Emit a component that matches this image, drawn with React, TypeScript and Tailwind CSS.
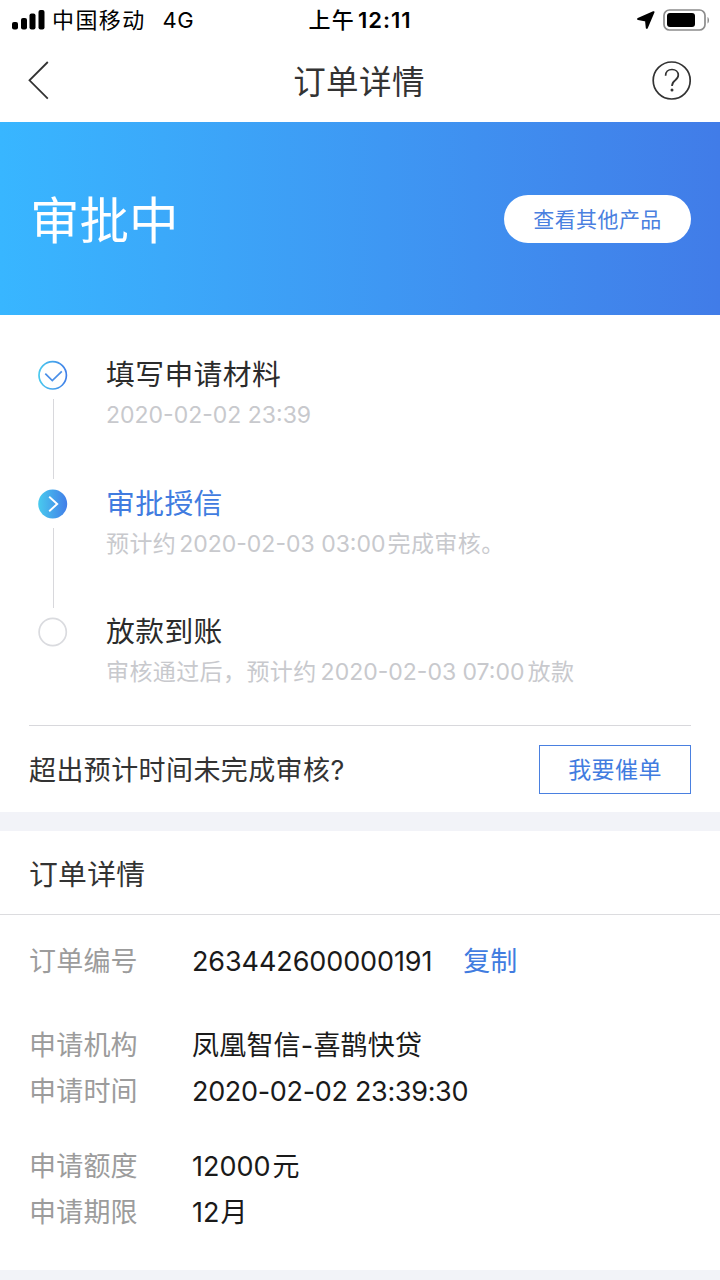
type StepState = "done" | "active" | "pending";

const STEPS: { title: string; state: StepState; hint: React.ReactNode }[] = [
  {
    title: "填写申请材料",
    state: "done",
    hint: <span className="tracking-normal">2020-02-02 23:39</span>,
  },
  {
    title: "审批授信",
    state: "active",
    hint: (
      <>
        预计约<span className="mr-[2px] ml-[3px] tracking-normal">2020-02-03 03:00</span>完成审核。
      </>
    ),
  },
  {
    title: "放款到账",
    state: "pending",
    hint: (
      <>
        审核通过后，预计约<span className="mr-[3px] ml-1 tracking-normal">2020-02-03 07:00</span>放款
      </>
    ),
  },
];

function StatusBar() {
  return (
    <div className="grid h-10 grid-cols-3 items-center text-[22px] leading-10 text-black">
      <div className="flex items-center pl-3">
        <svg width="33" height="21" viewBox="0 0 33 21" aria-hidden="true">
          <rect x="0" y="12" width="6" height="7.500" rx="2" />
          <rect x="9" y="8" width="6" height="11.500" rx="2" />
          <rect x="17.500" y="3.500" width="6" height="16" rx="2" />
          <rect x="26.500" y="0" width="6" height="19.500" rx="2" />
        </svg>
        <span className="ml-[7px] tracking-[1.4px]">中国移动</span>
        <span className="ml-[17px] tracking-[.5px]">4G</span>
      </div>
      <div className="flex items-center justify-center">
        <span className="font-medium tracking-[1.3px]">上午</span>
        <span className="ml-[3px] font-semibold tracking-[1px]">12:11</span>
      </div>
      <div className="flex items-center justify-end pr-[10px]">
        <svg width="18" height="18" viewBox="0 0 18 18" aria-hidden="true">
          <path
            d="M16.500 1.200 1.200 8 9 9.500 9.800 16.800z"
            stroke="#000"
            strokeWidth="2"
            strokeLinejoin="round"
          />
        </svg>
        <svg className="ml-2" width="47" height="23" viewBox="0 0 47 23" aria-hidden="true">
          <rect x="1" y="1" width="41" height="20" rx="5.500" fill="none" stroke="#8c8c8c" strokeWidth="1.700" />
          <rect x="4" y="4" width="28" height="14" rx="3" />
          <path d="M44.500 8v6.500c2-1 2-5.500 0-6.500z" fill="#8c8c8c" />
        </svg>
      </div>
    </div>
  );
}

function NavBar() {
  return (
    <header className="flex h-[82px] items-center justify-between px-7 text-[#333]">
      <svg width="40" height="40" viewBox="0 0 40 40" fill="none" stroke="currentColor" strokeWidth="1.800" aria-hidden="true">
        <path d="M19.800 1 1.500 19.300 19.800 37.600" />
      </svg>
      <h1 className="pt-[4px] pr-[2px] text-[32.500px] leading-none tracking-[.4px]">订单详情</h1>
      <svg width="40" height="40" viewBox="0 0 40 40" fill="none" stroke="currentColor" strokeWidth="1.700" aria-hidden="true">
        <circle cx="19.700" cy="19.500" r="18.500" />
        <path d="M13.600 14.700c0-3.800 2.600-6.200 6.400-6.200 3.600 0 6.300 2.200 6.300 5.600 0 2.500-1.300 3.900-3.300 5.400-2.300 1.700-3 2.800-3 5.600" />
        <circle cx="20" cy="29" r="1.500" fill="currentColor" stroke="none" />
      </svg>
    </header>
  );
}

function StepIcon({ state }: { state: StepState }) {
  return (
    <svg className="shrink-0" width="30" height="30" viewBox="0 0 30 30" fill="none" aria-hidden="true">
      <defs>
        <linearGradient id="step" x1="0" y1="0" x2="30" y2="0" gradientUnits="userSpaceOnUse">
          <stop stopColor="#49cbee" />
          <stop offset="1" stopColor="#417ce8" />
        </linearGradient>
      </defs>
      {state === "done" && (
        <>
          <circle cx="14.700" cy="15.300" r="13.700" stroke="url(#step)" strokeWidth="1.700" />
          <path d="m7.300 13.600 7 7 9.500-9.200" stroke="#4a8fe8" strokeWidth="1.700" />
        </>
      )}
      {state === "active" && (
        <>
          <circle cx="14.700" cy="15" r="14.500" fill="url(#step)" />
          <path d="m11.200 7.800 8 7.200-8 7.200" stroke="#fff" strokeWidth="1.900" />
        </>
      )}
      {state === "pending" && <circle cx="14.700" cy="15" r="13.600" stroke="#dadbdf" strokeWidth="1.700" />}
    </svg>
  );
}

function Steps() {
  return (
    <ol className="h-[410px] pt-10 pl-[38px]">
      {STEPS.map((step, i) => (
        <li key={step.title} className="flex h-[128.500px]">
          <div className="flex w-[30px] flex-col items-center pt-[5px]">
            <StepIcon state={step.state} />
            {i < STEPS.length - 1 && <div className="mt-[9px] h-[80px] w-px bg-[#d8d8dc]" />}
          </div>
          <div className="ml-[38px]">
            <h2
              className={
                step.state === "active"
                  ? "text-[28.800px] leading-10 tracking-[.4px] text-[#417ce0]"
                  : "text-[28.800px] leading-10 tracking-[.4px] text-[#2b2b2b]"
              }
            >
              {step.title}
            </h2>
            <p className="text-[23px] leading-10 tracking-[.4px] whitespace-nowrap text-[#c8c9cd]">
              {step.hint}
            </p>
          </div>
        </li>
      ))}
    </ol>
  );
}

function Row({ label, children }: { label: string; children: React.ReactNode }) {
  return (
    <div className="flex h-[46px] items-center text-[27px] leading-[46px] whitespace-nowrap">
      <dt className="w-[163px] tracking-[.2px] text-[#9c9c9c]">{label}</dt>
      <dd className="flex items-center text-[#1a1a1a]">{children}</dd>
    </div>
  );
}

export default function App() {
  return (
    <div className="h-[1280px] w-[720px] overflow-hidden bg-white font-['Inter','Noto_Sans_CJK_SC',sans-serif]">
      <StatusBar />
      <NavBar />

      <section className="flex h-[193px] items-center justify-between bg-linear-to-r from-[#38b6ff] to-[#417ce8] pr-[29px] pl-[30px]">
        <p className="pt-[6px] text-[49.500px] leading-none text-white">审批中</p>
        <button className="h-12 w-[187px] rounded-full bg-white pt-[2px] text-[21px] tracking-[.4px] text-[#4a80e0]">
          查看其他产品
        </button>
      </section>

      <Steps />

      <section className="mx-[29px] flex h-[87px] items-center justify-between border-t border-[#d8d8dc]">
        <p className="pt-[2px] text-[27px] leading-none tracking-[.4px] text-[#333]">超出预计时间未完成审核?</p>
        <button className="h-[49px] w-[152px] border border-[#4a80e0] pt-[2px] pr-2 pl-2 text-[23px] tracking-[.4px] text-[#417ce0]">
          我要催单
        </button>
      </section>

      <div className="h-[19px] bg-[#f2f3f8]" />

      <section>
        <h2 className="h-[84px] border-b border-[#dcdcdf] pl-[29px] text-[28.800px] leading-[88px] tracking-[.3px] text-[#333]">
          订单详情
        </h2>
        <dl className="h-[355px] pt-6 pl-[29px]">
          <Row label="订单编号">
            <span className="tracking-[-.1px]">263442600000191</span>
            <button className="ml-[31px] text-[#417ce0]">复制</button>
          </Row>
          <div className="mt-[38px]">
            <Row label="申请机构">
              <span className="tracking-[.2px]">凤凰智信-喜鹊快贷</span>
            </Row>
            <Row label="申请时间">
              <span className="tracking-[-.32px]">2020-02-02 23:39:30</span>
            </Row>
          </div>
          <div className="mt-[29px]">
            <Row label="申请额度">
              12000<span className="ml-[2px]">元</span>
            </Row>
            <Row label="申请期限">
              12<span className="ml-px">月</span>
            </Row>
          </div>
        </dl>
      </section>

      <div className="h-[10px] bg-[#f2f3f8]" />
    </div>
  );
}
